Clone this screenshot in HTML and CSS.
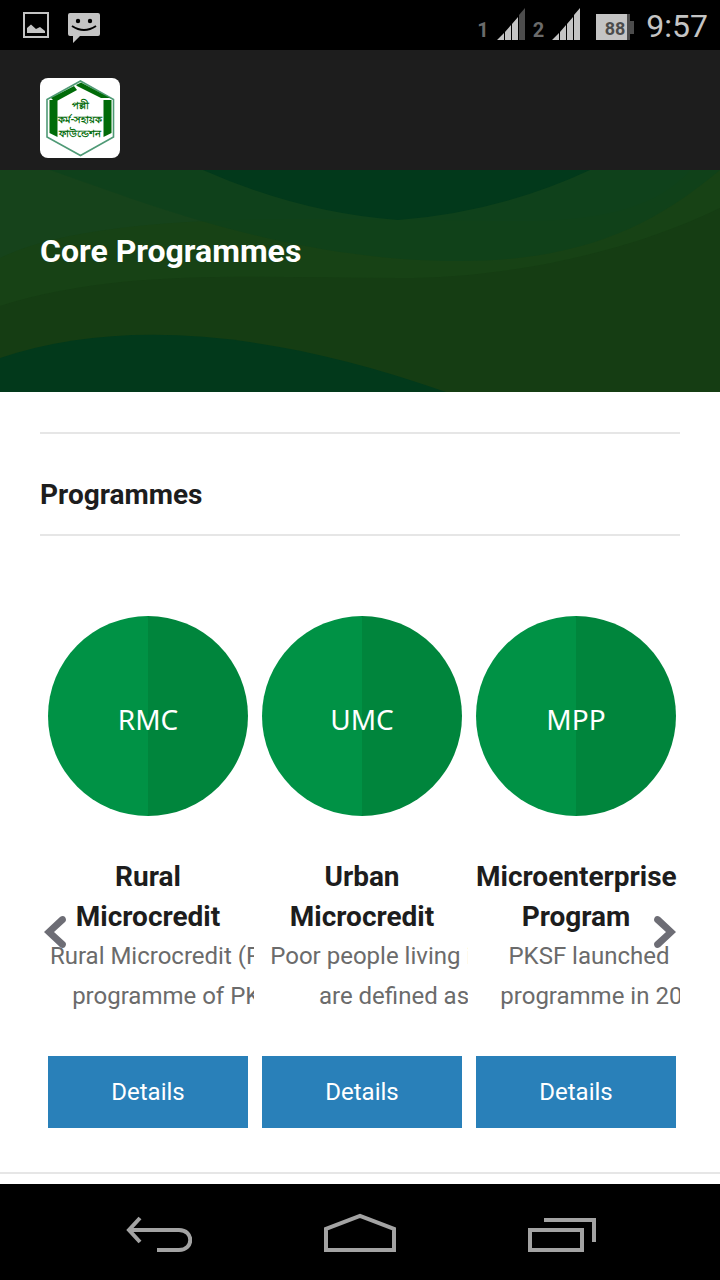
FILE: index.html
```html
<!DOCTYPE html>
<html lang="en">
<head>
    <meta charset="UTF-8">
    <meta name="viewport" content="width=device-width, initial-scale=1.0">
    <title>Core Programmes</title>
    <link rel="stylesheet" href="styles.css">
</head>
<body>
    <!-- Status bar -->
    <div class="status-bar">
        <div class="status-left">
            <svg width="26" height="26" viewBox="0 0 26 26">
                <rect x="1" y="1" width="24" height="24" fill="none" stroke="#c4c4c4" stroke-width="2"/>
                <path d="M4 21V16L8 12.5L13 17L17 15L22 19V21Z" fill="#c4c4c4"/>
            </svg>
            <svg width="34" height="32" viewBox="0 0 34 32">
                <path d="M3 1H31Q33 1 33 3V22Q33 24 31 24H13L6 31V24H3Q1 24 1 22V3Q1 1 3 1Z" fill="#c4c4c4"/>
                <circle cx="11" cy="9" r="2.2"/>
                <circle cx="23" cy="9" r="2.2"/>
                <path d="M5 14Q17 22 29 14" fill="none" stroke="#000" stroke-width="2"/>
            </svg>
        </div>
        <div class="status-right">
            <span class="sim">1</span>
            <svg class="signal" width="28" height="32" viewBox="0 0 28 32">
                <path d="M0 32L7 25V32ZM8 24L14 17V32H8ZM15 16L21 9V32H15Z" fill="#c4c4c4"/>
                <path d="M22 7L28 0V32H22Z" fill="#4c4c4c"/>
            </svg>
            <span class="sim">2</span>
            <svg class="signal" width="28" height="32" viewBox="0 0 28 32">
                <path d="M0 32L7 25V32ZM8 24L14 17V32H8ZM15 16L21 9V32H15ZM22 7L28 0V32H22Z" fill="#c4c4c4"/>
            </svg>
            <svg class="battery" width="38" height="26" viewBox="0 0 38 26">
                <path d="M30 0H34V7H38V20H34V26H30Z" fill="#4c4c4c"/>
                <rect width="31" height="26" fill="#c4c4c4"/>
                <text x="19" y="21" class="battery-text">88</text>
            </svg>
            <span class="clock">9:57</span>
        </div>
    </div>

    <header class="header">
        <a href="#" class="logo" aria-label="PKSF">
            <svg width="80" height="80" viewBox="0 0 80 80">
                <path d="M40.500 3L73.500 21.500V59L40.500 77.500L7 59V21.500Z" fill="none" stroke="#4f9a76" stroke-width="1.600"/>
                <path d="M9.500 22H17.500V59L9.500 55ZM63.500 22H71.500V55L63.500 59ZM11 20L34 8L37 12L15 24ZM36 7L41 4.500L70 20H61L37 8Z" fill="#006b08"/>
                <text x="40" y="31" class="logo-text">পল্লী</text>
                <text x="40" y="45" class="logo-text">কর্ম-সহায়ক</text>
                <text x="40" y="59" class="logo-text">ফাউন্ডেশন</text>
            </svg>
        </a>
    </header>

    <!-- Banner -->
    <section class="banner">
        <svg class="banner-waves" viewBox="0 0 720 222" preserveAspectRatio="none">
            <path d="M0 0H720V38C630 82 510 108 400 108C250 108 120 98 0 136Z" fill="#174215"/>
            <path d="M0 0H690C660 34 610 51 520 51C370 51 110 35 0 88Z" fill="#16431b"/>
            <path d="M50 0C150 35 290 91 460 91C590 91 660 50 720 0Z" fill="#0c411c" fill-opacity="0.6"/>
            <path d="M203 0Q300 43 398 50Q500 42 590 0Z" fill="#02391b"/>
            <path d="M0 188C120 148 270 160 446 222H0Z" fill="#02391b"/>
        </svg>
        <h1>Core Programmes</h1>
    </section>

    <main class="container">
        <h2>Programmes</h2>
        <div class="carousel">
            <article class="programme">
                <div class="circle">RMC</div>
                <h3>Rural<br>Microcredit</h3>
                <div class="desc"><p>Rural Microcredit (RMC),<br>programme of PKSF</p></div>
                <a href="#" class="details">Details</a>
            </article>
            <article class="programme">
                <div class="circle">UMC</div>
                <h3>Urban<br>Microcredit</h3>
                <div class="desc"><p>Poor people living in an<br>are defined as</p></div>
                <a href="#" class="details">Details</a>
            </article>
            <article class="programme">
                <div class="circle">MPP</div>
                <h3>Microenterprise<br>Program</h3>
                <div class="desc"><p>PKSF launched &nbsp;its<br>programme in 2001.</p></div>
                <a href="#" class="details">Details</a>
            </article>
            <button class="arrow prev" aria-label="Previous">
                <svg width="22" height="32" viewBox="0 0 22 32">
                    <path d="M0 16L16 1Q19 -1 21 1Q23 4 21 6L10 16L21 26Q23 28 21 31Q19 33 16 31Z" fill="#6d6d75"/>
                </svg>
            </button>
            <button class="arrow next" aria-label="Next">
                <svg width="22" height="32" viewBox="0 0 22 32">
                    <path d="M22 16L6 1Q3 -1 1 1Q-1 4 1 6L12 16L1 26Q-1 28 1 31Q3 33 6 31Z" fill="#6d6d75"/>
                </svg>
            </button>
        </div>
    </main>

    <!-- Navigation bar -->
    <nav class="nav-bar">
        <button aria-label="Back">
            <svg width="72" height="40" viewBox="0 0 72 40">
                <path d="M20 6L9 18L20 30M9 18H59C74 18 74 38 59 38H37" fill="none" stroke="#a3a3a3" stroke-width="4"/>
            </svg>
        </button>
        <button aria-label="Home">
            <svg width="72" height="40" viewBox="0 0 72 40">
                <path d="M2 38V17L36 4L70 17V38Z" fill="none" stroke="#a3a3a3" stroke-width="4"/>
            </svg>
        </button>
        <button aria-label="Recent apps">
            <svg width="72" height="40" viewBox="0 0 72 40">
                <path d="M2 18H54V38H2ZM16 8H66V30" fill="none" stroke="#a3a3a3" stroke-width="4"/>
            </svg>
        </button>
    </nav>
</body>
</html>
```

FILE: styles.css
```css
* {
    box-sizing: border-box;
}
body {
    font-family: Roboto, sans-serif;
    margin: 0;
    min-height: 100vh;
    display: flex;
    flex-direction: column;
    background: #fff;
    color: #1d1d1d;
}
h1, h2, h3, p {
    margin: 0;
}
h1, h2, h3 {
    line-height: 40px;
    font-weight: 700;
}
svg {
    display: block;
}
button {
    background: none;
    border: 0;
    padding: 0;
}

.status-bar {
    display: flex;
    justify-content: space-between;
    height: 50px;
    padding: 0 12px 0 23px;
    background: #000;
    color: #c4c4c4;
}
.status-left {
    display: flex;
    gap: 18px;
    padding-top: 12px;
}
.status-right {
    display: flex;
    align-items: flex-end;
    gap: 8px;
    padding-bottom: 10px;
}
.sim {
    font-size: 20px;
    line-height: 20px;
    font-weight: 700;
    color: #6b6b6b;
}
.battery {
    margin: 0 4px 0 8px;
}
.battery-text {
    font-size: 18px;
    font-weight: 700;
    text-anchor: middle;
    fill: #4c4c4c;
}
.clock {
    font-size: 32px;
    line-height: 28px;
}

.header {
    padding: 28px 40px 12px;
    background: #1d1d1d;
}
.logo {
    display: block;
    width: 80px;
    border-radius: 8px;
    background: #fff;
}
.logo-text {
    font-size: 10px;
    font-weight: 700;
    text-anchor: middle;
    fill: #006b08;
}

.banner {
    position: relative;
    height: 222px;
    padding: 61px 40px;
    background: #153d13;
}
.banner-waves {
    position: absolute;
    top: 0;
    left: 0;
    width: 100%;
    height: 100%;
}
.banner h1 {
    position: relative;
    font-size: 32px;
    color: #fff;
}

.container {
    flex: 1;
    padding: 40px 40px 0;
}
h2 {
    padding: 41px 0 19px;
    border-top: 2px solid #e6e6e6;
    border-bottom: 2px solid #e6e6e6;
    font-size: 28px;
}
.carousel {
    position: relative;
    display: grid;
    grid-template-columns: repeat(3, minmax(0, 1fr));
    gap: 14px;
    margin: 0 -40px;
    padding: 80px 44px 44px 48px;
    border-bottom: 2px solid #e6e6e6;
}
.circle {
    display: flex;
    align-items: center;
    justify-content: center;
    aspect-ratio: 1;
    padding-top: 6px;
    border-radius: 50%;
    background: linear-gradient(to right, #009245 50%, #00853c 50%);
    color: #fff;
    font-family: "Noto Sans", sans-serif;
    font-size: 28px;
}
h3 {
    padding-top: 41px;
    margin-bottom: -1px;
    font-size: 28px;
    text-align: center;
    white-space: nowrap;
}
.desc {
    margin-right: -6px;
    overflow: hidden;
}
.programme:nth-child(3) .desc {
    margin-right: -4px;
}
.desc p {
    width: 264px;
    font-size: 24px;
    line-height: 40px;
    color: #6b6b6b;
    text-align: center;
    white-space: nowrap;
}
.details {
    display: block;
    margin-top: 40px;
    background: #2980b9;
    color: #fff;
    font-size: 24px;
    line-height: 72px;
    text-align: center;
    text-decoration: none;
}
.arrow {
    position: absolute;
    top: 380px;
}
.prev {
    left: 44px;
}
.next {
    right: 44px;
}

.nav-bar {
    display: flex;
    justify-content: center;
    align-items: center;
    gap: 132px;
    height: 96px;
    background: #000;
}
```
